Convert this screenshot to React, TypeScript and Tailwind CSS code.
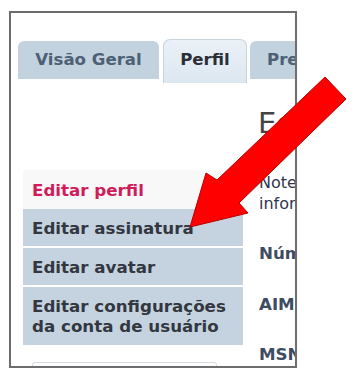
const tabs = [
  { label: "Visão Geral", width: "w-[141px]", active: false },
  { label: "Perfil", width: "w-[84px]", active: true },
  { label: "Preferências", width: "w-[130px]", active: false },
];

const menu = [
  { label: "Editar assinatura", tall: false },
  { label: "Editar avatar", tall: false },
  { label: "Editar configurações\nda conta de usuário", tall: true },
];

const fields = ["Número de ICQ:", "AIM:", "MSN Messenger:"];

const App = () => {
  return (
    <div className="relative w-[360px] h-[378px] bg-white overflow-hidden pt-[11px] pl-[9px] font-['DejaVu_Sans',sans-serif]">
      {/* Screenshot frame */}
      <div className="w-[288px] h-[357px] border-2 border-[#6d6d6d] overflow-hidden bg-white">
        {/* Tabs */}
        <div className="flex items-start pt-[26px] pl-[7px]">
          {tabs.map((tab, i) =>
            tab.active ? (
              <div
                key={tab.label}
                className={`${tab.width} h-[44px] shrink-0 ml-[4px] flex items-center justify-center pb-[2px] rounded-t-[7px] border border-b-0 border-[#c6d4e0] bg-gradient-to-b from-[#eaf1f7] to-[#dde7f0] text-[16.6px] font-bold text-[#2b2f38]`}
              >
                {tab.label}
              </div>
            ) : (
              <div
                key={tab.label}
                className={`${tab.width} h-[38px] shrink-0 mt-[2px] ${i > 0 ? "ml-[3px] justify-start pl-[17px]" : "justify-center"} flex items-center rounded-t-[6px] bg-[#c2d2df] text-[16.6px] font-bold text-[#4d6074] whitespace-nowrap`}
              >
                {tab.label}
              </div>
            )
          )}
        </div>

        <div className="flex">
          {/* Sidebar */}
          <div className="w-[220px] shrink-0 ml-[12px] mt-[87px]">
            <div className="h-[39px] flex items-center pl-[9px] bg-[#f8f8f8] text-[16.7px] leading-[20px] font-bold text-[#d01c5b]">
              Editar perfil
            </div>
            {menu.map((item, i) => (
              <div
                key={item.label}
                className={`${item.tall ? "h-[58px]" : "h-[37px]"} ${i > 0 ? "mt-[2px]" : ""} flex items-center pl-[9px] bg-[#c4d3df] text-[16.7px] leading-[20px] font-bold text-[#33373f] whitespace-pre-line`}
              >
                {item.label}
              </div>
            ))}
            <div className="mt-[17px] ml-[9px] w-[185px] h-[20px] border border-[#d3dae1] rounded-t-[3px]" />
          </div>

          {/* Main column */}
          <div className="ml-[16px] shrink-0 w-[400px]">
            <h1 className="mt-[26px] -ml-[1px] text-[29px] leading-none font-normal text-[#444]">
              Editar perfil
            </h1>
            <p className="mt-[34px] text-[16px] leading-[21px] text-[#2f3650] whitespace-nowrap">
              Note que estas
              <br />
              informações podem ser vistas por todos.
            </p>
            <div className="mt-[29px]">
              {fields.map((f, i) => (
                <div
                  key={f}
                  className={`${i === 1 ? "mt-[31px]" : i === 2 ? "mt-[30px]" : ""} text-[16.7px] leading-[20px] font-bold text-[#3e4c63] whitespace-nowrap`}
                >
                  {f}
                </div>
              ))}
            </div>
          </div>
        </div>
      </div>

      {/* Red arrow overlay */}
      <svg
        className="absolute left-0 top-0 pointer-events-none"
        width="360"
        height="378"
        viewBox="0 0 360 378"
      >
        <polygon
          points="325,77 346,99 239,203 248,213 190,227 206,173 217,180"
          fill="#ff0000"
          stroke="#b80000"
          strokeWidth="1"
          strokeLinejoin="miter"
        />
      </svg>
    </div>
  );
};

export default App;
